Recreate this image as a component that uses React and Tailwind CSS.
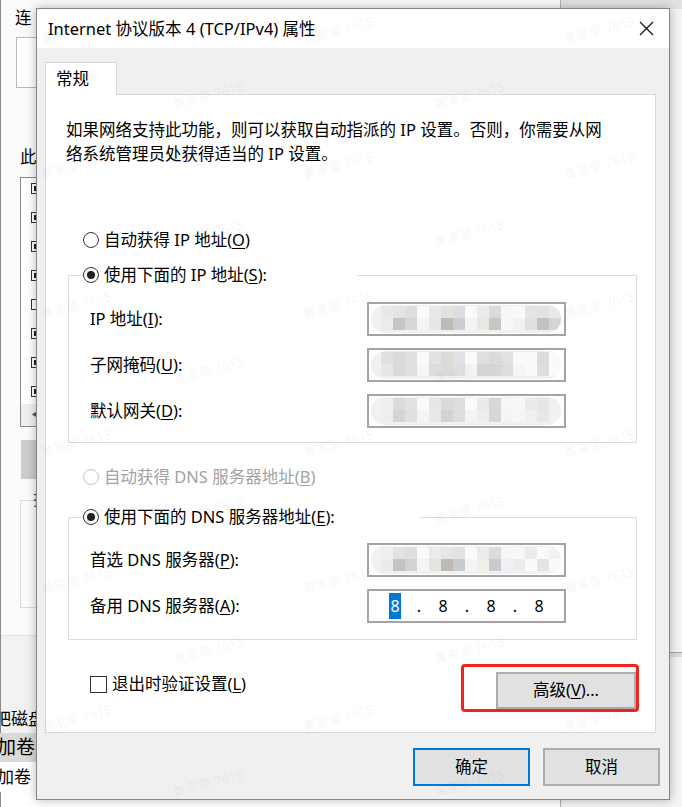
import React from "react";

const FONT = "font-['Noto_Sans','Noto_Sans_CJK_SC',sans-serif]";

function Radio({ checked, disabled, children }) {
  return (
    <span className="flex items-center gap-[5px] leading-[24px]">
      <span
        className={
          disabled
            ? "w-[16px] h-[16px] rounded-full border border-[#c4c4c4] bg-white flex items-center justify-center"
            : "w-[16px] h-[16px] rounded-full border border-[#333333] bg-white flex items-center justify-center"
        }
      >
        {checked && <span className="w-[8px] h-[8px] rounded-full bg-[#222222]" />}
      </span>
      <span className={disabled ? "text-[#a2a2a2]" : "text-black"}>{children}</span>
    </span>
  );
}

const U = ({ children }) => <u className="underline underline-offset-[2px] decoration-1">{children}</u>;

function Mosaic({ rows, offset = 10 }) {
  return (
    <div className="h-full flex items-center pl-[2px]">
      <div className="relative h-[28px] w-[190px] rounded-full bg-[#f1f1f1] overflow-hidden blur-[0.6px]">
        <div className="absolute top-[1px] flex flex-col" style={{ left: offset }}>
          {rows.map((r, i) => (
            <div key={i} className="flex">
              {r.map((c, j) => (
                <div key={j} className="w-[12px] h-[12px]" style={{ background: c }} />
              ))}
            </div>
          ))}
        </div>
      </div>
    </div>
  );
}

const M1 = [
  ["#e8e8e8", "#e4e4e4", "#dedede", "#fafafa", "#e8e8e8", "#e4e2e0", "#dcdde0", "#fafafa", "#ecebe9", "#dadada", "#f4f6f8", "#fafafa", "#e4e4e4", "#e2e2e2", "#e8e8e8"],
  ["#ececec", "#c8c6c4", "#d6d7d9", "#f4f4f4", "#e8e6e4", "#bebab5", "#cacdd3", "#f4f4f4", "#ebe8e4", "#c6c6c6", "#f6f8fa", "#f2f2f2", "#e2e0dc", "#c4c2c0", "#d2d5d8"],
];
const M2 = [
  ["#e0e0e2", "#dcdad6", "#e0e0e2", "#fafafa", "#e2e2e2", "#dcd9d6", "#e0e2e6", "#fafafa", "#e0e0e2", "#dcdcdc", "#e2e2e2", "#fafafa", "#fafafa", "#dcdcdc", "#fafafa"],
  ["#e6e6e6", "#dcdad8", "#e0e0e2", "#f6f6f6", "#dcdcdc", "#dadada", "#e0e0e2", "#f4f4f4", "#d6d6d8", "#d6d6d8", "#dcdee2", "#f6f6f6", "#fafafa", "#dedede", "#fafafa"],
];
const M3 = [
  ["#eeeeee", "#dadada", "#e2e2e4", "#fafafa", "#e6e6e6", "#dcdad8", "#dcdee2", "#fafafa", "#eceae8", "#d8d8d8", "#f6f6f8", "#f8f8f8", "#eaeaea", "#e6e6e6", "#f0f0f0"],
  ["#eeeeee", "#d4d4d4", "#dee0e2", "#f4f4f4", "#e8e8e8", "#d4d2d0", "#dadcde", "#f4f4f4", "#eeeeee", "#d6d6d6", "#f4f4f4", "#f6f6f6", "#f0f0f0", "#e8e8e8", "#f2f2f2"],
];
const M4 = [
  ["#eeeeee", "#e2e2e2", "#dedede", "#fafafa", "#ebebeb", "#e8e6e4", "#e0e2e4", "#fafafa", "#ecebe8", "#dcdcdc", "#f6f6f6", "#f8f8f8", "#ebebeb", "#fafafa", "#f2f2f2"],
  ["#eaeaea", "#c6c4c2", "#d0d2d6", "#f4f4f4", "#e6e4e2", "#bdb9b5", "#c8ccd2", "#f4f4f4", "#f2eee8", "#c8cacc", "#eef0f4", "#ececec", "#fafafa", "#e4e4e4", "#fafafa"],
];

function Field({ children }) {
  return <div className="w-[199px] h-[34px] border-2 border-[#a4a4a4] bg-white overflow-hidden">{children}</div>;
}

function Row({ label, children }) {
  return (
    <div className="flex items-center">
      <div className="w-[277px] leading-[24px]">{label}</div>
      {children}
    </div>
  );
}

const WM_A = [30, 165, 305, 443, 580, 718];
const WM_B = [95, 233, 370, 510, 650, 783];
const marks = [];
WM_A.forEach((y) => [40, 302, 563].forEach((x) => marks.push([x, y])));
WM_B.forEach((y) => [172, 433].forEach((x) => marks.push([x, y])));

export default function App() {
  return (
    <div className={`relative w-[682px] h-[807px] overflow-hidden bg-[#f7f7f7] text-[16.5px] text-black ${FONT}`}>
      {/* back window (left) */}
      <div className="absolute left-0 top-0 w-[560px] h-[807px] bg-[#fbfbfb] border-l border-[#8c8c8c] flex flex-col">
        <div className="pl-[14px] pt-[6px] leading-[24px]">连</div>
        <div className="ml-[15px] mt-[7px] h-[51px] w-[200px] border border-[#b9b9b9] bg-white" />
        <div className="pl-[19px] mt-[57px] leading-[24px]">此</div>
        <div className="ml-[19px] mt-[8px] h-[250px] w-[200px] border border-[#8a8a8a] bg-white flex flex-col">
          <div className="flex flex-col gap-[18px] pl-[10px] pt-[5px]">
            {[1, 1, 1, 1, 0, 1, 1, 1].map((c, i) => (
              <div key={i} className="w-[11px] h-[11px] border border-[#333333] flex items-center justify-center">
                {c ? <span className="w-[5px] h-[5px] bg-[#222222]" /> : null}
              </div>
            ))}
          </div>
          <div className="mt-auto h-[22px] bg-[#f0f0f0] flex items-center pl-[10px] text-[12px] text-[#555555]">◀</div>
        </div>
        <div className="ml-[20px] mt-[13px] h-[39px] w-[200px] bg-[#cccccc]" />
        <div className="ml-[19px] mt-[21px] h-[108px] w-[200px] border border-[#dcdcdc] pl-[12px]">
          <span className="block -mt-[12px] leading-[20px] bg-[#fbfbfb] w-[20px] text-[#6a4a2a]">拍</span>
        </div>
        <div className="mt-[27px] flex-1 bg-[#f2f2f2] border-t border-[#e2e2e2] flex flex-col">
          <div className="h-[69px]" />
          <div className="h-[28px] leading-[28px] -ml-[7px] text-[17px]">吧磁盘</div>
          <div className="h-[29px] leading-[29px] bg-[#d9d9d9] -ml-[4px] text-[19px]">加卷</div>
          <div className="h-[30px] leading-[30px] -ml-[4px] text-[17px] bg-white">加卷</div>
          <div className="flex-1 bg-white" />
        </div>
      </div>

      {/* back window (right) */}
      <div className="absolute left-[560px] top-0 w-[122px] h-[807px] bg-[#f4f4f4] border-l border-[#b4b4b4] flex flex-col">
        <div className="h-[9px] bg-[#e2e2e2]" />
        <div className="h-[643px]" />
        <div className="h-[1px] bg-[#a8a8a8]" />
        <div className="h-[4px] bg-[#dcdcdc]" />
      </div>

      {/* dialog */}
      <div className="absolute left-[36px] top-[8px] w-[634px] border border-[#858585] bg-[#f0f0f0] shadow-[0_0_10px_rgba(0,0,0,0.28)] flex flex-col">
        <div className="h-[39px] bg-white flex items-center justify-between pl-[11px] pr-[15px]">
          <span className="leading-[24px]">Internet 协议版本 4 (TCP/IPv4) 属性</span>
          <svg width="15" height="15" viewBox="0 0 15 15">
            <path d="M1 1L14 14M14 1L1 14" stroke="#111111" strokeWidth="1.2" />
          </svg>
        </div>

        <div className="pt-[14px] pl-[8px] pr-[9px] pb-[13px] flex flex-col">
          <div className="relative z-10 -mb-px w-[72px] h-[33px] bg-white border border-b-0 border-[#d9d9d9] pl-[10px] leading-[32px]">
            常规
          </div>
          <div className="mr-[4px] bg-white border border-[#d9d9d9] flex flex-col pb-[23px]">
            <p className="mt-[23px] pl-[20px] leading-[24px]">
              如果网络支持此功能，则可以获取自动指派的 IP 设置。否则，你需要从网
              <br />
              络系统管理员处获得适当的 IP 设置。
            </p>

            <div className="mt-[62px] ml-[37px]">
              <Radio>
                自动获得 IP 地址(<U>O</U>)
              </Radio>
            </div>

            <fieldset className="mt-[11px] ml-[22px] mr-[18px] p-0 border border-[#dcdcdc]">
              <legend className="ml-[14px] p-0 w-[274px]">
                <Radio checked>
                  使用下面的 IP 地址(<U>S</U>):
                </Radio>
              </legend>
              <div className="pl-[21px] pt-[15px] pb-[14px] flex flex-col gap-[12px]">
                <Row label={<>IP 地址(<U>I</U>):</>}>
                  <Field>
                    <Mosaic rows={M1} />
                  </Field>
                </Row>
                <Row label={<>子网掩码(<U>U</U>):</>}>
                  <Field>
                    <Mosaic rows={M2} />
                  </Field>
                </Row>
                <Row label={<>默认网关(<U>D</U>):</>}>
                  <Field>
                    <Mosaic rows={M3} />
                  </Field>
                </Row>
              </div>
            </fieldset>

            <div className="mt-[22px] ml-[37px]">
              <Radio disabled>
                自动获得 DNS 服务器地址(<U>B</U>)
              </Radio>
            </div>

            <fieldset className="mt-[16px] ml-[22px] mr-[18px] p-0 border border-[#dcdcdc]">
              <legend className="ml-[14px] p-0 w-[337px]">
                <Radio checked>
                  使用下面的 DNS 服务器地址(<U>E</U>):
                </Radio>
              </legend>
              <div className="pl-[21px] pt-[14px] pb-[16px] flex flex-col gap-[12px]">
                <Row label={<>首选 DNS 服务器(<U>P</U>):</>}>
                  <Field>
                    <Mosaic rows={M4} />
                  </Field>
                </Row>
                <Row label={<>备用 DNS 服务器(<U>A</U>):</>}>
                  <Field>
                    <div className="h-full flex items-center pl-[14px] text-[16px]">
                      <span className="w-[24px] flex justify-center">
                        <span className="bg-[#0078d7] text-white leading-[26px] px-[1px]">8</span>
                      </span>
                      <span className="w-[24px] text-center">.</span>
                      <span className="w-[24px] text-center">8</span>
                      <span className="w-[24px] text-center">.</span>
                      <span className="w-[24px] text-center">8</span>
                      <span className="w-[24px] text-center">.</span>
                      <span className="w-[24px] text-center">8</span>
                    </div>
                  </Field>
                </Row>
              </div>
            </fieldset>

            <div className="mt-[32px] flex items-start justify-between ml-[44px] mr-[19px]">
              <div className="flex items-center gap-[5px] leading-[24px]">
                <span className="w-[17px] h-[17px] border border-[#333333] bg-white" />
                <span>
                  退出时验证设置(<U>L</U>)
                </span>
              </div>
              <div className="relative">
                <div className="w-[140px] h-[37px] bg-[#e1e1e1] border-2 border-[#adadad] flex items-center justify-center">
                  高级(<U>V</U>)...
                </div>
                <div className="absolute -left-[35px] -top-[8px] -right-[3px] -bottom-[3px] border-[3px] border-[#f02222] rounded-[4px] pointer-events-none" />
              </div>
            </div>
          </div>

          <div className="mt-[15px] flex justify-end gap-[13px]">
            <div className="w-[117px] h-[38px] bg-[#e1e1e1] border-2 border-[#0078d7] flex items-center justify-center">确定</div>
            <div className="w-[117px] h-[38px] bg-[#e1e1e1] border-2 border-[#adadad] flex items-center justify-center">取消</div>
          </div>
        </div>
      </div>

      {/* watermark */}
      <div className="absolute inset-0 pointer-events-none">
        {marks.map(([x, y], i) => (
          <span
            key={i}
            className="absolute text-[13px] leading-[16px] whitespace-nowrap text-black/[0.06] -rotate-[15deg] origin-center"
            style={{ left: x, top: y - 8 }}
          >
            黄家豪 7615
          </span>
        ))}
      </div>
    </div>
  );
}
